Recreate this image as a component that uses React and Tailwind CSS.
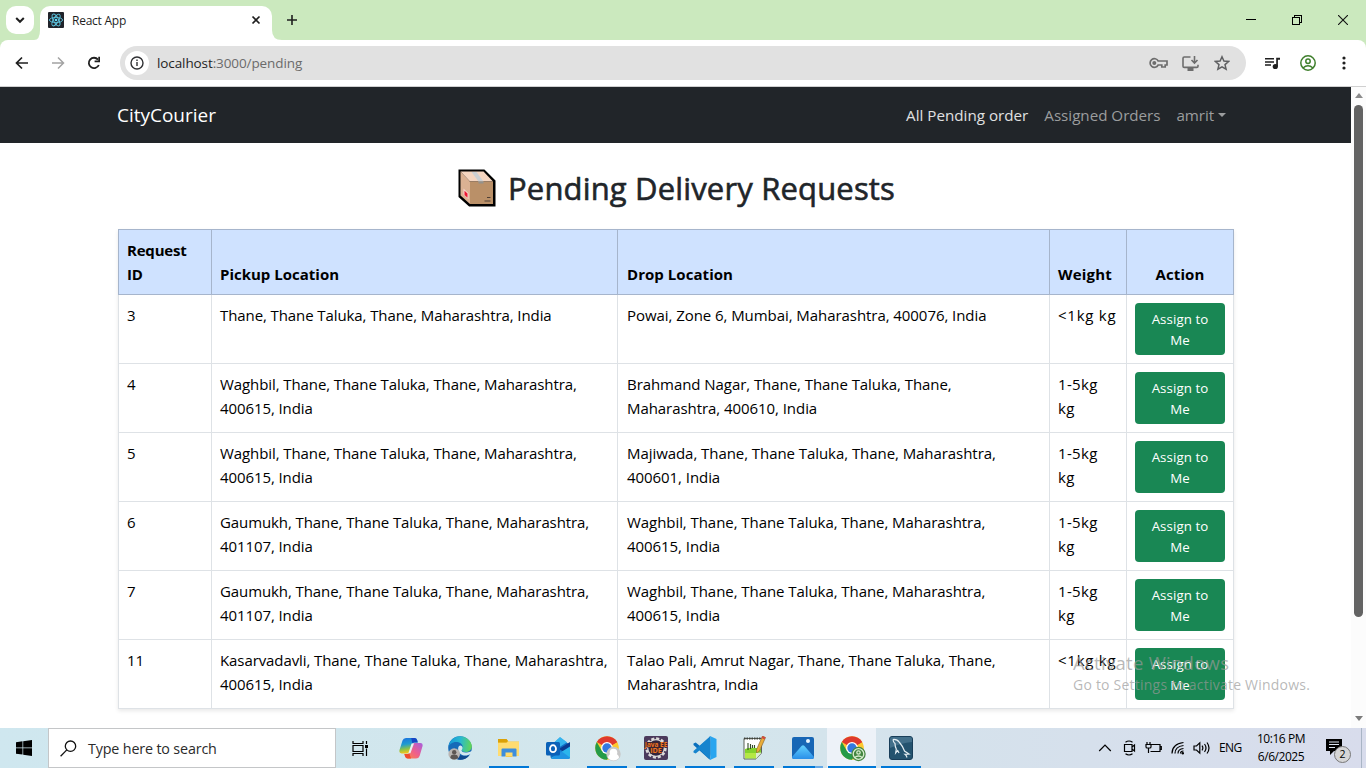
import React from "react";

const rows = [
  { id: "3", pickup: ["Thane, Thane Taluka, Thane, Maharashtra, India"], drop: ["Powai, Zone 6, Mumbai, Maharashtra, 400076, India"], weight: ["<1kg kg"] },
  { id: "4", pickup: ["Waghbil, Thane, Thane Taluka, Thane, Maharashtra,", "400615, India"], drop: ["Brahmand Nagar, Thane, Thane Taluka, Thane,", "Maharashtra, 400610, India"], weight: ["1-5kg", "kg"] },
  { id: "5", pickup: ["Waghbil, Thane, Thane Taluka, Thane, Maharashtra,", "400615, India"], drop: ["Majiwada, Thane, Thane Taluka, Thane, Maharashtra,", "400601, India"], weight: ["1-5kg", "kg"] },
  { id: "6", pickup: ["Gaumukh, Thane, Thane Taluka, Thane, Maharashtra,", "401107, India"], drop: ["Waghbil, Thane, Thane Taluka, Thane, Maharashtra,", "400615, India"], weight: ["1-5kg", "kg"] },
  { id: "7", pickup: ["Gaumukh, Thane, Thane Taluka, Thane, Maharashtra,", "401107, India"], drop: ["Waghbil, Thane, Thane Taluka, Thane, Maharashtra,", "400615, India"], weight: ["1-5kg", "kg"] },
  { id: "11", pickup: ["Kasarvadavli, Thane, Thane Taluka, Thane, Maharashtra,", "400615, India"], drop: ["Talao Pali, Amrut Nagar, Thane, Thane Taluka, Thane,", "Maharashtra, India"], weight: ["<1kg kg"] },
];

function Lines({ lines }) {
  return lines.map((l) => <div key={l} className="whitespace-nowrap">{l}</div>);
}

function ReactLogo() {
  return (
    <svg width="16" height="16" viewBox="0 0 16 16" className="block">
      <rect width="16" height="16" rx="1" fill="#20232a" />
      <g fill="none" stroke="#5cc5e0" strokeWidth="0.9">
        <ellipse cx="8" cy="8" rx="6.6" ry="2.6" />
        <ellipse cx="8" cy="8" rx="6.6" ry="2.6" transform="rotate(60 8 8)" />
        <ellipse cx="8" cy="8" rx="6.6" ry="2.6" transform="rotate(120 8 8)" />
      </g>
      <circle cx="8" cy="8" r="1.3" fill="#61dafb" />
    </svg>
  );
}

function TabStrip() {
  return (
    <div className="flex h-10 bg-[#cbe9be]">
      <div className="ml-[6px] mt-[6px] flex h-7 w-7 items-center justify-center rounded-[10px] bg-white">
        <svg width="10" height="8" viewBox="0 0 10 8" fill="none" stroke="#1f1f1f" strokeWidth="2"><path d="M1.2 2 5 5.8 8.8 2" /></svg>
      </div>
      <svg width="10" height="40" viewBox="0 0 10 40" className="-mr-[4px]"><path d="M10 30v10H0q6 0 6-10z" fill="#fff" /></svg>
      <div className="mt-[6px] flex h-[34px] w-[232px] items-center rounded-t-[10px] bg-white pl-2">
        <div className="-mt-[6px]"><ReactLogo /></div>
        <span className="-mt-[4px] ml-2 flex-1 text-[12px] tracking-[-0.25px] text-[#1f1f1f]">React App</span>
        <svg width="10" height="10" viewBox="0 0 10 10" className="-mt-[6px] mr-[11px]" stroke="#1f1f1f" strokeWidth="1.7"><path d="m1.5 1.5 7 7m0-7-7 7" /></svg>
      </div>
      <svg width="10" height="40" viewBox="0 0 10 40"><path d="M0 30v10h10Q0 40 0 30z" fill="#fff" /></svg>
      <svg width="10" height="10" viewBox="0 0 10 10" className="ml-[5px] mt-[15px]" stroke="#1f1f1f" strokeWidth="1.6"><path d="M5 0v10M0 5h10" /></svg>
      <div className="flex-1" />
      <div className="flex items-start gap-[36px] pr-[18px] pt-[15px]">
        <svg width="10" height="10" viewBox="0 0 10 10" shapeRendering="crispEdges" stroke="#000"><path d="M0 4.5h10" /></svg>
        <svg width="10" height="10" viewBox="0 0 10 10" shapeRendering="crispEdges" stroke="#000" fill="none"><path d="M.5 2.500h7v7h-7zM2.500 2.500v-2h7v7h-2" /></svg>
        <svg width="10" height="10" viewBox="0 0 10 10" stroke="#111" strokeWidth="1.1"><path d="m0 0 10 10m0-10L0 10" /></svg>
      </div>
    </div>
  );
}

function Toolbar() {
  return (
    <div className="bg-[#cbe9be]">
      <div className="flex h-[46px] items-center rounded-t-[8px] bg-white pl-[15px]">
        <svg width="14" height="14" viewBox="0 0 14 14" fill="none" stroke="#1f1f1f" strokeWidth="1.7"><path d="M13 7H2M7 1.500 1.500 7 7 12.500" /></svg>
        <svg width="14" height="14" viewBox="0 0 14 14" fill="none" stroke="#a3a3a3" strokeWidth="1.500" className="ml-[22px]"><path d="M1 7h11M7 1.500 12.500 7 7 12.500" /></svg>
        <svg width="14" height="14" viewBox="0 0 14 14" className="ml-[22px]"><path d="M11.800 9A5.200 5.200 0 1 1 11 3.600" fill="none" stroke="#1f1f1f" strokeWidth="1.800" /><path d="M13 .8v5.400H7.600V4.500h3.700V.8z" fill="#1f1f1f" /></svg>
        <div className="ml-[19px] flex h-[34px] w-[1126px] items-center rounded-full bg-[#e1e1e1] pl-[5px] pr-4">
          <div className="flex h-6 w-6 items-center justify-center rounded-full bg-white">
            <svg width="14" height="14" viewBox="0 0 14 14" fill="none" stroke="#303134" strokeWidth="1.400"><circle cx="7" cy="7" r="6" /><path d="M7 6v4M7 3.600v1.500" /></svg>
          </div>
          <span className="ml-2 flex-1 text-[13.500px] tracking-[-0.1px] text-[#6b6b6b]"><span className="text-[#1f1f1f]">localhost</span>:3000/pending</span>
          <div className="flex items-center gap-[14px]">
            <svg width="19" height="12" viewBox="0 0 19 12" className="-ml-px" fill="none" stroke="#6d6d6d" strokeWidth="1.700"><path d="M9.200 4A4.300 4.300 0 1 0 9.200 8h3.600v2h3.400V8H18V4z" /><circle cx="5.300" cy="6" r="2" fill="#6d6d6d" stroke="none" /></svg>
            <svg width="17" height="15" viewBox="0 0 17 15" className="mr-px" fill="none" stroke="#6d6d6d" strokeWidth="1.600"><path d="M8.500 1H2.200Q1 1 1 2.200v8q0 1.200 1.200 1.200h12.600q1.200 0 1.200-1.200V8.700M12.500 0v6.500M9.500 4l3 3 3-3" /><path d="M5.500 11.500h6V15h-6z" fill="#6d6d6d" stroke="none" /></svg>
            <svg width="16" height="16" viewBox="0 0 16 16" fill="none" stroke="#5f6062" strokeWidth="1.500"><path d="m8 1.800 1.900 4.300 4.700.4-3.600 3.100 1.100 4.600L8 11.800l-4.100 2.400L5 9.600 1.400 6.500l4.700-.4z" /></svg>
          </div>
        </div>
        <svg width="16" height="13" viewBox="0 0 16 13" className="ml-[19px]"><path d="M0 1.800h9M0 5h9M0 8h6" stroke="#1f1f1f" strokeWidth="1.600" /><path d="M11.200.8H15v1.900h-2.100v6.800h-1.700z" fill="#1f1f1f" /><circle cx="10.300" cy="9.500" r="2.600" fill="#1f1f1f" /></svg>
        <svg width="16" height="16" viewBox="0 0 16 16" className="ml-[19px]" fill="none" stroke="#3f7f2c" strokeWidth="1.500"><circle cx="8" cy="8" r="7.200" /><circle cx="8" cy="6.300" r="2.200" /><path d="M3 13q5-4.500 10 0" /></svg>
        <svg width="4" height="14" viewBox="0 0 4 14" className="ml-[26px]" fill="#1f1f1f"><circle cx="2" cy="2" r="1.600" /><circle cx="2" cy="7" r="1.600" /><circle cx="2" cy="12" r="1.600" /></svg>
      </div>
      <div className="h-px bg-[#d0d0d0]" />
    </div>
  );
}

function Parcel() {
  return (
    <svg width="38" height="38" viewBox="0 0 38 38">
      <path d="M1.500 1.500H26L36.500 12v24.500H11.500L1.500 27.500z" fill="#000" stroke="#000" strokeWidth="2" />
      <path d="M2.500 2.500 12 12.500V35L2.500 26.500z" fill="#dbb193" />
      <path d="M2.500 2.500H25.500L35 12.500H12z" fill="#f5d5c0" />
      <path d="M12 12.500h23V35H12z" fill="#ba9068" />
      <path d="M13.500 3h5l7 9.500h-5z" fill="#cbcfd2" />
      <path d="M20.500 12.500h5v2h-5z" fill="#94918a" />
      <path d="m5.500 19.500 5 4.800v6l-5-4.700z" fill="#f8d4d0" />
      <path d="m6.500 21.700 3 2.800v4.200l-3-2.800z" fill="#ed1632" />
      <path d="M29 28.500h3.500M26.500 32h6" stroke="#4e3e34" strokeWidth="1.100" />
    </svg>
  );
}

function Page() {
  const head = "border-b border-r border-[#a6b5cc] px-2 py-2 flex items-end";
  const cell = "border-b border-r border-[#dee2e6] px-2 py-2";
  return (
    <div className="flex h-[641px] bg-white">
      <div className="w-[1351px] overflow-hidden">
        <nav className="flex h-14 items-center bg-[#212529] pl-[117px] pr-[125px] text-[15.200px] text-[#9b9d9e]">
          <span className="flex-1 pt-px text-[19px] tracking-[-0.02px] text-white">CityCourier</span>
          <span className="mr-4 whitespace-nowrap text-[#e0e0e1]">All Pending order</span>
          <span className="mr-4 whitespace-nowrap tracking-[-0.02px]">Assigned Orders</span>
          <span className="flex items-center tracking-[-0.1px]">amrit<i className="ml-1 border-x-[4.500px] border-t-[4.500px] border-x-transparent border-t-[#9b9d9e]" /></span>
        </nav>
        <h2 className="mt-[25px] flex h-[40px] items-center justify-center gap-[12px] pl-[2px] text-[31px] text-[#212529]">
          <Parcel />
          <span className="whitespace-nowrap tracking-[0.16px] [-webkit-text-stroke:0.6px_#212529]">Pending Delivery Requests</span>
        </h2>
        <div className="ml-[118px] mt-[21px] w-[1116px] text-[15px] leading-6 text-black shadow-[0_2px_4px_rgba(0,0,0,0.09)]">
          <div className="grid h-[66px] grid-cols-[93px_406px_432px_77px_107px] border-l border-t border-[#a6b5cc] bg-[#cfe2ff] font-bold">
            <div className={head + " tracking-[-0.2px]"}><span>Request<br />ID</span></div>
            <div className={head}>Pickup Location</div>
            <div className={head + " pl-[9px] tracking-[0.05px]"}>Drop Location</div>
            <div className={head + " tracking-[0.2px]"}>Weight</div>
            <div className={head + " justify-center tracking-[0.1px]"}>Action</div>
          </div>
          {rows.map((r) => (
            <div key={r.id} className="grid h-[69px] grid-cols-[93px_406px_432px_77px_107px] border-l border-[#dee2e6] bg-white">
              <div className={cell}>{r.id}</div>
              <div className={cell + " tracking-[-0.09px]"}><Lines lines={r.pickup} /></div>
              <div className={cell + " pl-[9px] tracking-[-0.06px]"}><Lines lines={r.drop} /></div>
              <div className={cell + (r.weight.length > 1 ? " tracking-[0.35px]" : " tracking-[0.75px]")}><Lines lines={r.weight} /></div>
              <div className={cell}>
                <button className="flex h-[52px] w-[90px] items-center justify-center rounded-[4px] bg-[#198754] pt-[2px] text-center text-[13.300px] leading-[21px] tracking-[0.08px] text-white"><span>Assign to<br />Me</span></button>
              </div>
            </div>
          ))}
        </div>
      </div>
      <div className="flex w-[15px] flex-col items-center justify-between bg-[#fcfcfc] pb-[7px] pt-[6px]">
        <i className="border-x-[4.500px] border-b-[5px] border-x-transparent border-b-[#8b8b8b]" />
        <div className="mt-[7px] h-[512px] w-[9px] rounded-full bg-[#636363]" />
        <div className="flex-1" />
        <i className="border-x-[4.500px] border-t-[5px] border-x-transparent border-t-[#7b7b7b]" />
      </div>
    </div>
  );
}

const svg = { width: 24, height: 24, viewBox: "0 0 24 24" };

function Copilot() {
  return (
    <svg {...svg}>
      <defs>
        <linearGradient id="cpA" x1="0" y1="0" x2="0.2" y2="1"><stop stopColor="#1b6fe0" /><stop offset=".45" stopColor="#1f9bd0" /><stop offset=".75" stopColor="#8ac34a" /><stop offset="1" stopColor="#f5c518" /></linearGradient>
        <linearGradient id="cpB" x1="1" y1="0" x2="0" y2="1"><stop stopColor="#a65ee0" /><stop offset=".5" stopColor="#ee5f8d" /><stop offset="1" stopColor="#ff8a3d" /></linearGradient>
      </defs>
      <path d="M7 2h8.500q2 0 2.600 2l.7 2.500h-3.500q-1.600 0-2.100 1.600L11 15.500q-.7 2-2.700 2H2.600Q-.3 17.500.5 14L3.500 4.500Q4.300 2 7 2z" fill="url(#cpA)" />
      <path d="M17 22.500H8.700q-2 0-2.600-2L5.400 18h3.300q1.700 0 2.200-1.600L13.200 9q.6-2 2.600-2h5.700q2.700 0 2 3.300L20.600 20q-.9 2.500-3.600 2.500z" fill="url(#cpB)" />
      <path d="M12.200 2h3.300q2 0 2.600 2l.7 2.500h-3.500q-1.300 0-1.900 1z" fill="#1846c4" />
      <path d="M12 22.500H8.700q-2 0-2.600-2L5.400 18h3.300q1 0 1.600-.7z" fill="#f04c2d" />
      <path d="m12.600 7.500-3.200 9.500 2 .3L15 7.500z" fill="#e6f2f2" />
    </svg>
  );
}

function Edge() {
  return (
    <svg {...svg}>
      <defs>
        <linearGradient id="edA" x1="0" y1=".4" x2="1" y2=".5"><stop stopColor="#1697d8" /><stop offset=".5" stopColor="#29b9cf" /><stop offset="1" stopColor="#63d653" /></linearGradient>
      </defs>
      <circle cx="12" cy="12" r="11.800" fill="#176bb8" />
      <path d="M.3 12C1 4.500 6 .2 12 .2S23.800 5 23.800 10c0 4-3 6-6.200 6-3 0-4-1.200-4-2.200s1-1.300 1-3.300C14.600 8 11.500 6 8 6S.5 8.500.3 12z" fill="url(#edA)" />
      <path d="M8 11c-1.500 6 4 11 13.500 8.200C19 22.500 16 23.800 12.500 23.800 7 23.800 4 18.500 8 11z" fill="#104a8f" />
      <path d="M11 10c1.500-1.500 4 0 3.500 2.300-.4 1.500-1 1.700-.9 2.500.3 1.400 3.700 3 10.700 0l.5 3-2.600.2c-2 1.500-5 2-8 1-3.300-1-5.400-5.700-3.200-9z" fill="#d3e8ee" />
      <circle cx="6.200" cy="18" r="5.800" fill="#b9b5b2" /><circle cx="6.200" cy="16.200" r="2.200" fill="#5d5754" /><path d="M2.300 22q0-3.400 3.900-3.400t3.900 3.400q-4 3-7.800 0z" fill="#5d5754" />
    </svg>
  );
}

function Folder() {
  return (
    <svg {...svg}>
      <path d="M1 3h8.500l2 2.500H22V20H1z" fill="#f7cb4d" />
      <path d="M1 3h8.500l1.500 2-1.500 1.500H1z" fill="#dba107" />
      <path d="M1 7h8.500L11 5.700h11V20H1z" fill="#ffdc70" />
      <path d="M4.500 20.500v-7q0-1 1-1h13q1 0 1 1v7h-4v-4h-7v4z" fill="#3d8edc" />
      <path d="M8.500 20h7v1h-7z" fill="#f7cb4d" />
    </svg>
  );
}

function Outlook() {
  return (
    <svg {...svg}>
      <path d="M4.500 10 14 1.500 24 9v12q0 2-2 2H7q-2.500 0-2.500-2z" fill="#1270c5" />
      <path d="M8 6.500 14 1l7 5.300L12 12z" fill="#35b5ef" />
      <path d="m13 13 11-7v13z" fill="#0b3b91" />
      <path d="M5 22q1 1 3 1h14q2 0 2-2V10.500L12 18z" fill="#2bb5ec" />
      <path d="m13 13.500 11 8q-.5 1.500-2 1.500H6z" fill="#1c88df" opacity=".7" />
      <rect x="0" y="6" width="14" height="13.500" rx="1.500" fill="#0a61b8" />
      <ellipse cx="7" cy="12.700" rx="3" ry="3.500" fill="none" stroke="#fff" strokeWidth="1.800" />
    </svg>
  );
}

function Chrome({ green }) {
  return (
    <svg width="26" height="26" viewBox="0 0 26 26" className="ml-[2px] mt-[2px]">
      <circle cx="12" cy="12" r="11.800" fill="#fdc82f" />
      <path d="M12 12 1.800 6.100A11.800 11.800 0 0 1 22.200 6.100z" fill="#df392d" />
      <path d="M1.800 6.100A11.800 11.800 0 0 0 12 23.800l5.200-8.900L12 12 6.900 14.900z" fill="#259b48" />
      <path d="M12 6.100h10.200L12 12z" fill="#df392d" />
      <circle cx="12" cy="12" r="5.900" fill="#fff" /><circle cx="12" cy="12" r="4.700" fill="#3478e0" />
      <circle cx="18.500" cy="18" r="7.200" fill={green ? "#438540" : "#c7c7c7"} />
      {green ? (
        <g fill="none" stroke="#d8edcf" strokeWidth="1.300"><circle cx="18.500" cy="18" r="5.300" /><circle cx="18.500" cy="16.500" r="1.700" /><path d="M14.700 21.500q3.800-3 7.600 0" /></g>
      ) : (
        <g fill="#fff"><circle cx="18.500" cy="16.500" r="3.800" /><path d="M13 22q0-4.500 5.500-4.500T24 22q-5.500 5-11 0z" /></g>
      )}
    </svg>
  );
}

function JavaIde() {
  return (
    <svg {...svg}>
      <rect width="24" height="24" rx="2" fill="#4b3a5c" />
      <circle cx="12" cy="12" r="9.200" fill="none" stroke="#dcdad9" strokeWidth="3" strokeDasharray="3 1.800" />
      <circle cx="12" cy="12" r="8.300" fill="#302540" stroke="#dcdad9" strokeWidth="1.200" />
      <path d="M1 6h22v5.500H1zM6 11.500h12v6H6z" fill="#3c2430" />
      <text x="12" y="11.300" textAnchor="middle" fontSize="7" fontWeight="700" fill="#ee7420" textLength="22.500" lengthAdjust="spacingAndGlyphs">Java EE</text>
      <text x="12" y="17.300" textAnchor="middle" fontSize="7.200" fontWeight="700" fill="#ee7420">IDE</text>
    </svg>
  );
}

function VsCode() {
  return (
    <svg {...svg}>
      <path d="M17.500.3 7 10 2.700 6.600.5 7.600v1.500L16.500 23.500l1-5.500z" fill="#0b70bd" />
      <path d="M17.500 23.700 7 14l-4.300 3.400-2.200-1v-1.500L17 .4l.5 5.600z" fill="#1684ce" />
      <path d="m17.500.3 6 2.800v17.800l-6 2.800q-.8 0-1.300-.7 1.200.3 1.300-1V2q-.1-1.300-1.300-1 .5-.7 1.300-.7z" fill="#29a5ef" />
    </svg>
  );
}

function NotepadPlus() {
  return (
    <svg {...svg}>
      <path d="M2 2.500h17.500V17L14 23H2z" fill="#fff" stroke="#5c6258" />
      <path d="M3 13q6-2.500 16 0v4l-5 5.500H3z" fill="#83d32c" />
      <path d="M3 17h12v5H3z" fill="#b5e844" />
      <path d="M2 2.500h17.500" stroke="#3f423c" strokeWidth="2" strokeDasharray="1.500 1" />
      <path d="M6 7v7M8.500 8v5M10.500 9v3M12.500 9v3" stroke="#344c2b" strokeWidth="1.100" />
      <path d="m20.500 0 3 1.500-6 13.500-2.800 2-.2-3.500z" fill="#e9ad3a" stroke="#805b2b" strokeWidth=".6" />
      <path d="m20.500 0 3 1.500-1 2-3-1.500z" fill="#d24b40" />
      <path d="m14 17 5.500-.5L14 23z" fill="#dcebd0" />
    </svg>
  );
}

function Photos() {
  return (
    <svg {...svg}>
      <defs><linearGradient id="phA" x1="0" y1="0" x2="0" y2="1"><stop stopColor="#61d0ff" /><stop offset="1" stopColor="#2a8fe8" /></linearGradient></defs>
      <rect x="1" y="1" width="22" height="22" rx="2" fill="#1766b5" />
      <path d="M1 21 10.500 10q1.500-1.500 3 0L23 21q0 2-2 2H3q-2 0-2-2z" fill="url(#phA)" />
      <circle cx="17" cy="5" r="2" fill="#e9f6ff" />
    </svg>
  );
}

function MySql() {
  return (
    <svg {...svg}>
      <rect x=".5" y=".5" width="23" height="23" rx="2.500" fill="#24536f" stroke="#193e59" />
      <path d="M1 12V3q0-2 2-2h18q2 0 2 2v3Q12 7 1 12z" fill="#426f8a" />
      <path d="M4 3.500q4-.5 6.500 3 3.500 4 5 8.500l4.500 3-4 .3q1.500 1 2 3.200M4 3.500q.2 2.500 2 4 0 3 1.300 5.500l-.6 4 2-2.500 1.300 2.500" fill="none" stroke="#e5eef3" strokeWidth="1.200" />
    </svg>
  );
}

function TaskItem({ children, running, active, grouped }) {
  return (
    <div className={"flex h-10 w-[49px] flex-col items-center justify-between " + (active ? "bg-[#edf2f8]" : "")}>
      <div className="flex h-[38px] items-center pt-[2px]">{children}</div>
      <div className="flex h-[2px] w-full justify-center">
        {running && <div className={"h-[2px] bg-[#0078d7] " + (active ? "w-12" : grouped ? "w-8" : "w-10")} />}
        {grouped && <div className="h-[2px] w-2 bg-[#66a9e6]" />}
      </div>
    </div>
  );
}

function Tray() {
  const s = { fill: "none", stroke: "#000", strokeWidth: 1.2 };
  return (
    <div className="flex h-10 items-center text-[12px] text-black">
      <svg width="14" height="8" viewBox="0 0 14 8" {...s}><path d="m1.200 7 5.800-5.800L12.800 7" /></svg>
      <svg width="14" height="16" viewBox="0 0 14 16" {...s} className="ml-[11px]"><path d="M1.500 4.500h7.500v7H1.500zM9 7l2.500-2v6L9 9M2.500 2.200q3.500-2.400 7 0M2.500 13.800q3.500 2.400 7 0" /></svg>
      <svg width="17" height="14" viewBox="0 0 17 14" {...s} className="ml-[8px]"><path d="M6.500 3.500H15v7H5.500M15 5.500h1.300v3H15M2 1v2.500M5 1v2.500M1 3.500h5v2.200q0 1.300-1.200 1.300H2.200Q1 7 1 5.700zM3.500 7v5" /></svg>
      <svg width="14" height="14" viewBox="0 0 14 14" {...s} className="ml-[9px]"><path d="M1 12.500Q1 3 12.500 1.500M4 12.500q0-7 8.500-8M7 12.500q0-4.500 5.500-5" /><path d="M9.500 12.500q0-2.500 3-2.500" /><circle cx="11.800" cy="12.300" r="1.200" fill="#000" stroke="none" /></svg>
      <svg width="17" height="14" viewBox="0 0 17 14" {...s} className="ml-[8px]"><path d="M1 5h2.500l3.300-3.200v10.400L3.500 9H1zM9 4.700q1.700 2.300 0 4.600M11.500 3q3 4 0 8M14 1.500q4 5.500 0 11" /></svg>
      <span className="ml-[9px] w-[24px] tracking-[-0.6px]">ENG</span>
      <div className="ml-[11px] w-[54px] whitespace-nowrap text-center leading-[18px] tracking-[-0.45px]"><div>10:16 PM</div><div>6/6/2025</div></div>
      <div className="relative ml-[18px] mt-[6px] h-6 w-[25px]">
        <svg width="16" height="17" viewBox="0 0 16 17"><path d="M0 0h16v12H8l-4 4v-4H0z" fill="#000" /><path d="M3 3h10M3 5.500h10M3 8.500h6" stroke="#dbe3ef" /></svg>
        <div className="absolute left-[8px] top-[7px] flex h-[17px] w-[17px] items-center justify-center rounded-full border border-[#777] bg-[#d5d5d6] text-[10.500px]">2</div>
      </div>
      <div className="ml-[10px] h-10 w-px bg-[#a9b5c5]" />
    </div>
  );
}

function Taskbar() {
  return (
    <div className="flex h-10 bg-linear-to-r from-[#cfe7ef] via-[#d3e6ec] to-[#d8dcec]">
      <div className="flex w-12 items-center justify-center">
        <svg width="16" height="16" viewBox="0 0 16 16"><path d="M0 2.200 6.500 1.300v6.200H0zM7.200 1.200 16 0v7.500H7.200zM0 8.300h6.500v6.200L0 13.700zM7.200 8.300H16V16l-8.800-1.300z" /></svg>
      </div>
      <div className="flex w-[288px] items-center border border-[#c4c6c8] bg-white pl-[11px]">
        <svg width="17" height="17" viewBox="0 0 17 17" fill="none" stroke="#111" strokeWidth="1.300"><circle cx="10.500" cy="6.200" r="5.200" /><path d="M6.800 9.900.6 16.200" /></svg>
        <span className="ml-[11px] pt-[2px] text-[14.300px] tracking-[-0.15px] text-[#2b2b2b]">Type here to search</span>
      </div>
      <div className="flex w-[49px] items-center justify-center">
        <svg width="17" height="17" viewBox="0 0 17 17" fill="none" stroke="#000" strokeWidth="1.200"><path d="M1 1v2.500h10V1M1 5.500h10v6H1zM1 16v-2.500h10V16M14.500 1v3M14.500 8.500V16" /><path d="M13 5h3v3h-3z" fill="#000" stroke="none" /></svg>
      </div>
      <div className="w-px" />
      <TaskItem><Copilot /></TaskItem>
      <TaskItem><Edge /></TaskItem>
      <TaskItem running><Folder /></TaskItem>
      <TaskItem><Outlook /></TaskItem>
      <TaskItem running><Chrome /></TaskItem>
      <TaskItem running><JavaIde /></TaskItem>
      <TaskItem running><VsCode /></TaskItem>
      <TaskItem running><NotepadPlus /></TaskItem>
      <TaskItem running grouped><Photos /></TaskItem>
      <TaskItem running active><Chrome green /></TaskItem>
      <TaskItem running><MySql /></TaskItem>
      <div className="flex-1" />
      <Tray />
      <div className="w-[4px]" />
    </div>
  );
}

export default function App() {
  return (
    <div className="relative h-[768px] w-[1366px] overflow-hidden font-['Open_Sans','Noto_Sans',sans-serif]">
      <TabStrip />
      <Toolbar />
      <Page />
      <Taskbar />
      <div className="pointer-events-none absolute left-[1073px] top-[650px] whitespace-nowrap text-[#999]/70">
        <div className="text-[18.500px] leading-[25px] tracking-[0.28px]">Activate Windows</div>
        <div className="text-[14px] leading-[20px] tracking-[0.22px]">Go to Settings to activate Windows.</div>
      </div>
    </div>
  );
}
